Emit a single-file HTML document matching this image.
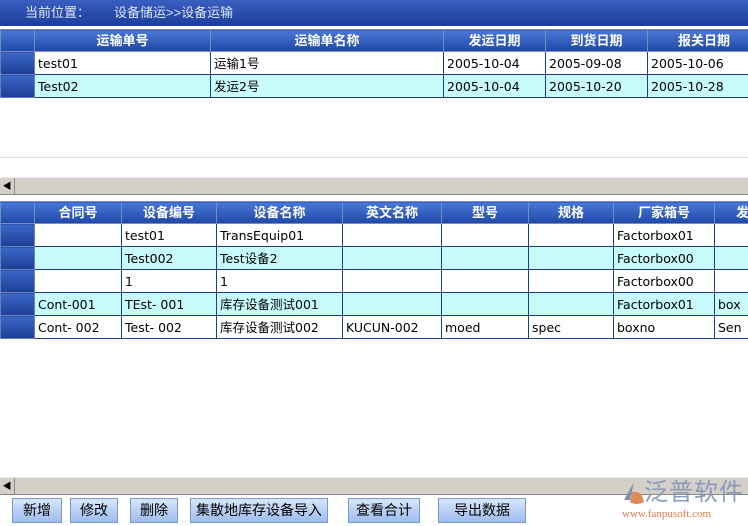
<html><head><style>
body{margin:0;width:748px;height:526px;background:#fff;font-family:"Liberation Sans","Noto Sans CJK SC",sans-serif;font-size:13px;position:relative;overflow:hidden}
.t{position:absolute;left:0;top:0;width:748px;height:26px;background:linear-gradient(#3a5fc0,#1c3d9a);color:#dfe6ff;font-size:13px;line-height:26px}
table{position:absolute;border-collapse:collapse;table-layout:fixed}
td,th{border:1px solid #1c3d8a;height:23px;line-height:21px;padding:0 3px;white-space:nowrap;overflow:hidden;font-size:13px;box-sizing:border-box}
td{font-family:"DejaVu Sans","Noto Sans CJK SC",sans-serif;font-size:12.5px}
th{height:22px;background:linear-gradient(#4a78d8,#1f48a8);color:#fff;font-weight:bold;border-color:#7a8cc0}
td.s{background:linear-gradient(#3b67c8,#1d3f95);border-color:#6a80bc}
tr.c td{background:#c8fcfc}
tr.c td.s{background:linear-gradient(#3b67c8,#1d3f95)}
.sb{position:absolute;left:0;width:748px;height:16px;background:#d4d0c8;border-top:1px solid #eee;border-bottom:1px solid #888}
.sb span{position:absolute;left:0;top:0;width:14px;height:16px;background:#d4d0c8;border-right:1px solid #888;font-size:9px;line-height:16px;text-align:center}
.b{position:absolute;top:498px;height:23px;background:linear-gradient(#d8e6fb,#9dbcef);border:1px solid #7f99c8;font-size:14px;line-height:23px;text-align:center}
</style></head><body>
<div class="t"><span style="position:absolute;left:25px">当前位置：</span><span style="position:absolute;left:114px">设备储运&gt;&gt;设备运输</span></div>
<table style="left:0;top:29px;width:760px">
<colgroup><col width="34"><col width="176"><col width="233"><col width="102"><col width="102"><col width="113"></colgroup>
<tr><th></th><th>运输单号</th><th>运输单名称</th><th>发运日期</th><th>到货日期</th><th>报关日期</th></tr>
<tr><td class="s"></td><td>test01</td><td>运输1号</td><td>2005-10-04</td><td>2005-09-08</td><td>2005-10-06</td></tr>
<tr class="c"><td class="s"></td><td>Test02</td><td>发运2号</td><td>2005-10-04</td><td>2005-10-20</td><td>2005-10-28</td></tr>
</table>
<div style="position:absolute;left:0;top:157px;width:748px;height:1px;background:#ddd"></div>
<div class="sb" style="top:177px"><span>◀</span></div>
<table style="left:0;top:201px;width:770px">
<colgroup><col width="34"><col width="87"><col width="95"><col width="126"><col width="99"><col width="87"><col width="85"><col width="101"><col width="56"></colgroup>
<tr><th></th><th>合同号</th><th>设备编号</th><th>设备名称</th><th>英文名称</th><th>型号</th><th>规格</th><th>厂家箱号</th><th>发</th></tr>
<tr><td class="s"></td><td></td><td>test01</td><td>TransEquip01</td><td></td><td></td><td></td><td>Factorbox01</td><td></td></tr>
<tr class="c"><td class="s"></td><td></td><td>Test002</td><td>Test设备2</td><td></td><td></td><td></td><td>Factorbox00</td><td></td></tr>
<tr><td class="s"></td><td></td><td>1</td><td>1</td><td></td><td></td><td></td><td>Factorbox00</td><td></td></tr>
<tr class="c"><td class="s"></td><td>Cont-001</td><td>TEst- 001</td><td>库存设备测试001</td><td></td><td></td><td></td><td>Factorbox01</td><td>box</td></tr>
<tr><td class="s"></td><td>Cont- 002</td><td>Test- 002</td><td>库存设备测试002</td><td>KUCUN-002</td><td>moed</td><td>spec</td><td>boxno</td><td>Sen</td></tr>
</table>
<div class="sb" style="top:477px"><span>◀</span></div>
<div class="b" style="left:12px;width:48px">新增</div>
<div class="b" style="left:70px;width:46px">修改</div>
<div class="b" style="left:130px;width:46px">删除</div>
<div class="b" style="left:190px;width:136px">集散地库存设备导入</div>
<div class="b" style="left:348px;width:70px">查看合计</div>
<div class="b" style="left:438px;width:86px">导出数据</div>
<div style="position:absolute;left:618px;top:478px;width:130px;height:48px">
<svg width="26" height="30" style="position:absolute;left:2px;top:2px"><path d="M14 2 L4 20 L10 20 Z" fill="#7f8fa8"/><path d="M12 12 Q22 10 24 22 Q16 26 10 22 Z" fill="#e08a5a"/></svg>
<span style="position:absolute;left:26px;top:0;font-size:24px;line-height:30px;color:#8a9ab8;letter-spacing:1px">泛普软件</span>
<span style="position:absolute;left:4px;top:30px;font-size:11px;color:#e07a4a;font-family:'Liberation Serif',serif">www.fanpusoft.com</span>
</div>
</body></html>
